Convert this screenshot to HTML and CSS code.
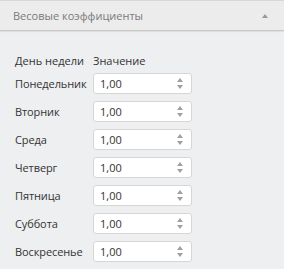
FILE: index.html
```html
<!DOCTYPE html>
<html lang="ru">
  <head>
    <meta charset="UTF-8" />
    <title>Весовые коэффициенты</title>
    <link rel="stylesheet" href="styles.css">
  </head>
  <body>
    <div class="panel">
      <div class="panel-header">
        <span class="panel-title">Весовые коэффициенты</span>
        <span class="collapse-icon"></span>
      </div>
      <div class="panel-body">
        <div class="weights-table">
          <div class="col-head">День недели</div>
          <div class="col-head">Значение</div>

          <div class="day">Понедельник</div>
          <div class="spin"><span class="spin-value">1,00</span><span class="spin-arrows"><i class="up"></i><i class="down"></i></span></div>

          <div class="day">Вторник</div>
          <div class="spin"><span class="spin-value">1,00</span><span class="spin-arrows"><i class="up"></i><i class="down"></i></span></div>

          <div class="day">Среда</div>
          <div class="spin"><span class="spin-value">1,00</span><span class="spin-arrows"><i class="up"></i><i class="down"></i></span></div>

          <div class="day">Четверг</div>
          <div class="spin"><span class="spin-value">1,00</span><span class="spin-arrows"><i class="up"></i><i class="down"></i></span></div>

          <div class="day">Пятница</div>
          <div class="spin"><span class="spin-value">1,00</span><span class="spin-arrows"><i class="up"></i><i class="down"></i></span></div>

          <div class="day">Суббота</div>
          <div class="spin"><span class="spin-value">1,00</span><span class="spin-arrows"><i class="up"></i><i class="down"></i></span></div>

          <div class="day">Воскресенье</div>
          <div class="spin"><span class="spin-value">1,00</span><span class="spin-arrows"><i class="up"></i><i class="down"></i></span></div>
        </div>
      </div>
    </div>
  </body>
</html>
```

FILE: styles.css
```css
* {
  margin: 0;
  padding: 0;
  box-sizing: border-box;
  font-family: "Open Sans", "DejaVu Sans", sans-serif;
}

html,
body {
  height: 100%;
  overflow: hidden;
}

body {
  background-color: #eeeff0;
  color: #333;
}

.panel {
  border-top: 1px solid #d8d8d8;
}

.panel-header {
  height: 30px;
  display: flex;
  align-items: center;
  justify-content: space-between;
  padding: 0 16px 0 13px;
  background-color: #ececec;
  border-bottom: 1px solid #c8c8c8;
  box-shadow: 0 1px 1px rgba(0, 0, 0, 0.06);
}

.panel-title {
  font-size: 11px;
  color: #7a7a7a;
}

.collapse-icon {
  width: 0;
  height: 0;
  border-left: 3px solid transparent;
  border-right: 3px solid transparent;
  border-bottom: 4px solid #9a9a9a;
}

.panel-body {
  padding: 22px 0 0 15px;
}

.weights-table {
  display: grid;
  grid-template-columns: 78px 99px;
  row-gap: 7px;
  align-items: center;
}

.col-head {
  font-size: 11px;
  color: #333;
  line-height: 15px;
  margin-bottom: -2px;
}

.day {
  font-size: 11px;
  color: #333;
  letter-spacing: -0.1px;
}

.spin {
  height: 21px;
  background-color: #fff;
  border: 1px solid #d6d6d6;
  border-radius: 3px;
  display: flex;
  align-items: center;
  justify-content: space-between;
  padding: 0 8px 0 6px;
}

.spin-value {
  font-size: 11px;
  color: #333;
}

.spin-arrows {
  display: flex;
  flex-direction: column;
  gap: 3px;
}

.spin-arrows i {
  width: 0;
  height: 0;
  border-left: 3px solid transparent;
  border-right: 3px solid transparent;
}

.spin-arrows .up {
  border-bottom: 4px solid #a0a0a0;
}

.spin-arrows .down {
  border-top: 4px solid #a0a0a0;
}
```
